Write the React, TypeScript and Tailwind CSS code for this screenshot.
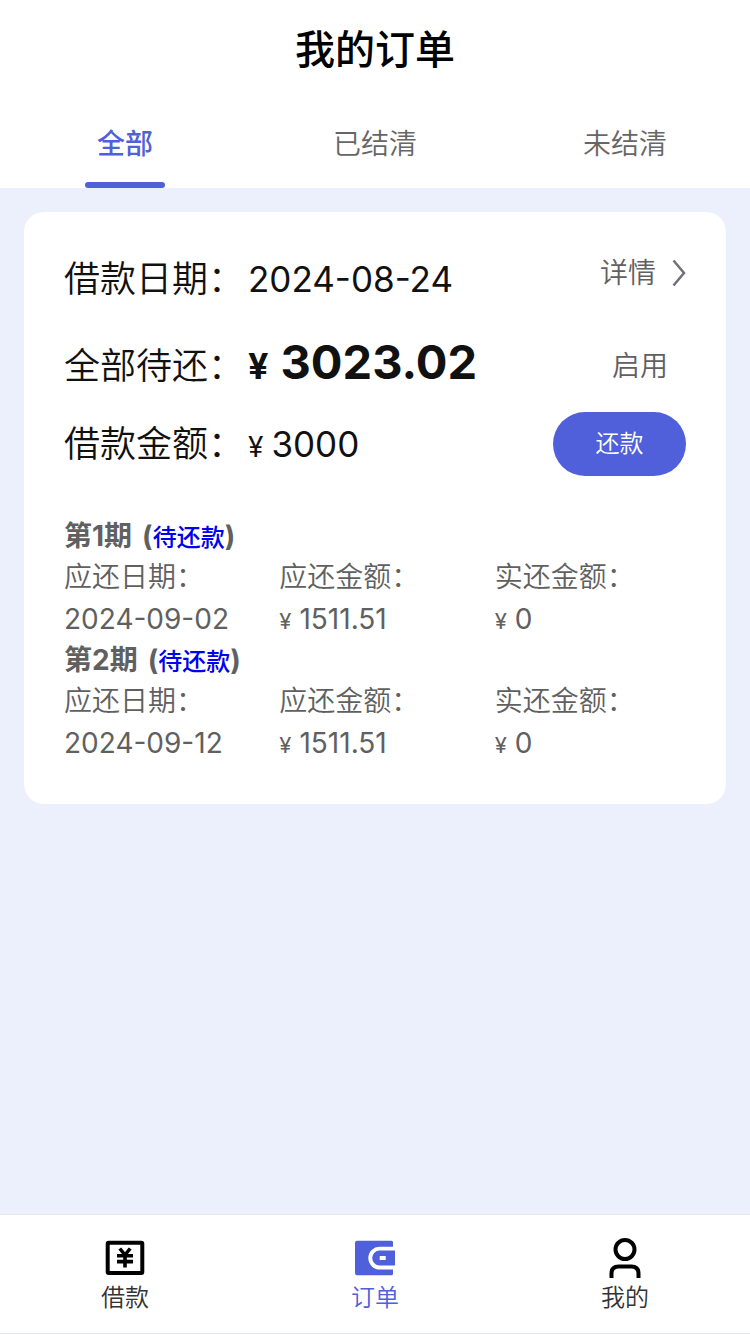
import React, { useState } from 'react';
import clsx from 'clsx';

const tabs = ['全部', '已结清', '未结清'];

const periods = [
  { no: 1, date: '2024-09-02', due: '1511.51', paid: '0' },
  { no: 2, date: '2024-09-12', due: '1511.51', paid: '0' },
];

const LoanIcon = () => (
  <svg className="w-10 h-10" viewBox="0 0 40 40" fill="none" stroke="currentColor">
    <rect x="2.7" y="4.700" width="34.600" height="30.400" rx="1" strokeWidth="4" />
    <path d="M14.800 10.500L20 17M25.200 10.500L20 17M12 17.800H28M12 23.600H28M20 16V29.500" strokeWidth="3.600" />
  </svg>
);

const OrderIcon = () => (
  <svg className="w-10 h-10" viewBox="0 0 40 40" fill="currentColor">
    <path d="M2 2.700H36.500Q38 2.700 38 4.200V8.700H24.700A11.400 11.400 0 0 0 24.700 31.500H38V35.800Q38 37.300 36.500 37.300H2Q0 37.300 0 35.300V4.700Q0 2.700 2 2.700Z" />
    <path fillRule="evenodd" d="M24.700 12.500H40V27.500H24.700A7.500 7.500 0 0 1 24.700 12.500ZM24.700 18V22H30.700V18Z" />
  </svg>
);

const MineIcon = () => (
  <svg className="w-10 h-10" viewBox="0 0 40 40" fill="none" stroke="currentColor" strokeWidth="4">
    <circle cx="20" cy="11.500" r="9.500" />
    <path d="M6.500 40V35.500Q6.500 28.500 13.500 28.500H26.500Q33.500 28.500 33.500 35.500V40" />
  </svg>
);

const navItems = [
  { label: '借款', icon: LoanIcon },
  { label: '订单', icon: OrderIcon },
  { label: '我的', icon: MineIcon },
];

const Money = ({ value }: { value: string }) => (
  <span className="flex items-baseline gap-2">
    <span className="text-[22px] leading-none">¥</span>
    <span>{value}</span>
  </span>
);

const App = () => {
  const [activeTab, setActiveTab] = useState('全部');

  return (
    <div className="min-h-screen flex flex-col bg-[#ecf0fd] text-[#111111] font-[350] font-[Inter,'Noto_Sans_CJK_SC',sans-serif]">
      {/* Header */}
      <header className="bg-white">
        <h1 className="h-25 flex items-center justify-center text-[40px] font-medium text-black">我的订单</h1>
        <div className="grid grid-cols-3">
          {tabs.map((tab) => (
            <button
              key={tab}
              onClick={() => setActiveTab(tab)}
              className={clsx(
                'h-22 flex flex-col items-center text-[28px]',
                activeTab === tab ? 'text-[#5060da] font-medium' : 'text-[#666666]'
              )}
            >
              <span className="h-22 flex items-center">{tab}</span>
              <span className={clsx('w-20 h-[6px] -mt-[6px] rounded-full', activeTab === tab && 'bg-[#5060da]')} />
            </button>
          ))}
        </div>
      </header>

      {/* Order card */}
      <main className="flex-1">
        <section className="m-6 p-10 bg-white rounded-[20px]">
          <div className="flex justify-between items-start text-[36px] leading-[54px]">
            <div className="flex items-baseline">
              <span className="w-46">借款日期：</span>
              <span className="text-[35px] font-normal">2024-08-24</span>
            </div>
            <a href="#detail" className="flex items-center gap-4 text-[28px] leading-[42px] text-[#606060]">
              详情
              <svg className="w-[14px] h-7" viewBox="0 0 14 28" fill="none" stroke="#707078" strokeWidth="2.500">
                <path d="M1.500 1.500L12 14L1.500 26.500" />
              </svg>
            </a>
          </div>

          <div className="mt-[30px] h-15 flex justify-between items-center text-[36px] leading-[60px]">
            <div className="flex items-baseline">
              <span className="w-46">全部待还：</span>
              <span className="flex items-baseline gap-3 font-bold">
                <span>¥</span>
                <span className="text-[47px] leading-none">3023.02</span>
              </span>
            </div>
            <span className="pr-[18px] text-[28px] text-[#606060]">启用</span>
          </div>

          <div className="mt-4 h-16 flex justify-between items-center text-[36px] leading-[60px]">
            <div className="flex items-baseline">
              <span className="w-46">借款金额：</span>
              <span className="flex items-baseline gap-2 font-normal">
                <span className="text-[28px] leading-none">¥</span>
                <span className="text-[35px] leading-none">3000</span>
              </span>
            </div>
            <button className="w-[133px] h-16 rounded-full bg-[#5060da] text-white text-2xl">还款</button>
          </div>

          {/* Repayment plan */}
          <div className="mt-10 -mr-6 text-[28px] leading-[42px] text-[#606060]">
            {periods.map((item) => (
              <div key={item.no}>
                <h2 className="flex gap-[10px] leading-10 font-bold">
                  <span>第{item.no}期</span>
                  <span>
                    (<span className="text-2xl font-medium text-[#0000ee]">待还款</span>)
                  </span>
                </h2>
                <dl className="grid grid-cols-3">
                  <div>
                    <dt>应还日期：</dt>
                    <dd className="font-normal">{item.date}</dd>
                  </div>
                  <div>
                    <dt>应还金额：</dt>
                    <dd className="font-normal">
                      <Money value={item.due} />
                    </dd>
                  </div>
                  <div>
                    <dt>实还金额：</dt>
                    <dd className="font-normal">
                      <Money value={item.paid} />
                    </dd>
                  </div>
                </dl>
              </div>
            ))}
          </div>
        </section>
      </main>

      {/* Bottom navigation */}
      <nav className="sticky bottom-0 h-30 grid grid-cols-3 bg-white border-y border-[#e6e8f0]">
        {navItems.map(({ label, icon: Icon }) => (
          <a
            key={label}
            href="#"
            className={clsx(
              'pt-[23px] flex flex-col items-center text-2xl leading-10',
              label === '订单' ? 'text-[#5060da]' : 'text-black'
            )}
          >
            <Icon />
            <span className={clsx(label !== '订单' && 'text-[#333333]')}>{label}</span>
          </a>
        ))}
      </nav>
    </div>
  );
};

export default App;
